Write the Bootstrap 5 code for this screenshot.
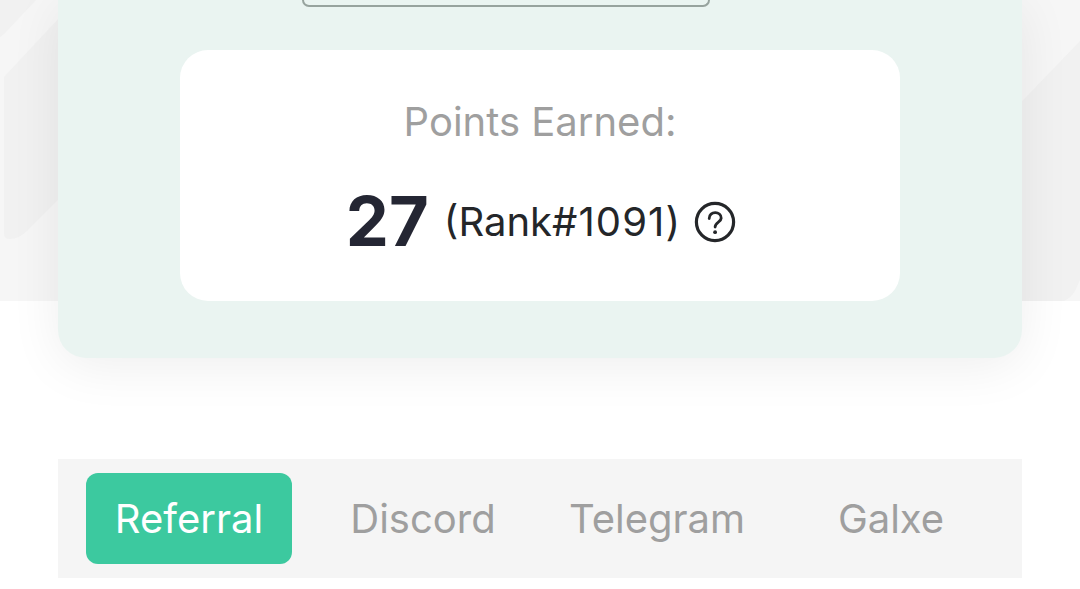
<!DOCTYPE html>
<html lang="en">
<head>
<meta charset="utf-8">
<meta name="viewport" content="width=device-width, initial-scale=1">
<title>Points Earned</title>
<link href="https://cdn.jsdelivr.net/npm/bootstrap@5.3.0/dist/css/bootstrap.min.css" rel="stylesheet">
<style>
body { font-family: Inter, "Liberation Sans", sans-serif; font-size: 40px; line-height: 48px; color: #242629; overflow: hidden; height: 589px; }
.hero-art { height: 301px; }
.page-wrap { padding: 0 58px; }
.panel { height: 358px; background: #eaf4f1; border-radius: 0 0 28px 28px; box-shadow: 0 8px 52px rgba(0,0,0,.07); }
.field-edge { width: 408px; height: 7px; margin-left: 244px; border: 2px solid #97a39e; border-top: 0; border-radius: 0 0 12px 12px; }
.score-card { width: 720px; height: 251px; margin-top: 43px; border-radius: 28px; }
.score-label { color: #9f9f9f; padding-top: 48px; }
.score-line { height: 84px; margin-top: 34px; padding-left: 2px; }
.score-value { font-size: 68.5px; line-height: 84px; color: #242633; }
.rank-text { margin-left: 15px; }
.rank-number { letter-spacing: 1.1px; }
.help-icon { margin-left: 13px; }
.tab-bar { margin-top: 101px; height: 119px; padding: 14px 28px; gap: 28px; background: #f5f5f5; }
.tab-bar .nav-link { height: 91px; padding: 0; border-radius: 12px; color: #9f9f9f; }
.tab-bar .nav-link.active { background: #3cc99f; color: #fff; }
</style>
</head>
<body class="bg-white position-relative">
<svg class="hero-art position-absolute top-0 start-0 w-100" viewBox="0 0 1080 301" aria-hidden="true">
  <rect width="1080" height="301" fill="#f6f6f6"/>
  <path d="M0 0H36L4 34L0 37Z" fill="#f1f1f1"/>
  <path d="M4 77L76 0V182L28 230Q19 239 10 239Q4 239 4 234Z" fill="#f1f1f1"/>
  <path d="M1000 124L1080 41V280L1075 291Q1071 298 1064 301H1000Z" fill="#f1f1f1"/>
</svg>
<main class="page-wrap position-relative">
  <section class="panel">
    <div class="d-flex"><div class="field-edge"></div></div>
    <div class="score-card bg-white mx-auto text-center">
      <div class="score-label">Points Earned:</div>
      <div class="score-line d-flex justify-content-center align-items-center">
        <span class="score-value fw-bold">27</span>
        <span class="rank-text">(Rank<span class="rank-number">#1091)</span></span>
        <svg class="help-icon" width="42" height="42" viewBox="0 0 42 42" fill="none" stroke="#242629" aria-label="Help">
          <circle cx="21" cy="21" r="18.6" stroke-width="3.2"/>
          <path d="M15.2 17.5C15 9.8 27.4 9.8 27.2 17.1C27.1 21.2 21.1 21 21.1 26" stroke-width="2.8" stroke-linecap="round"/>
          <circle cx="21.1" cy="31.2" r="1.9" fill="#242629" stroke="none"/>
        </svg>
      </div>
    </div>
  </section>
  <nav class="tab-bar nav nav-pills nav-fill flex-nowrap">
    <a class="nav-link active d-flex align-items-center justify-content-center w-100" href="#"><span>Referral</span></a>
    <a class="nav-link d-flex align-items-center justify-content-center w-100" href="#"><span>Discord</span></a>
    <a class="nav-link d-flex align-items-center justify-content-center w-100" href="#"><span>Telegram</span></a>
    <a class="nav-link d-flex align-items-center justify-content-center w-100" href="#"><span>Galxe</span></a>
  </nav>
</main>
<script src="https://cdn.jsdelivr.net/npm/bootstrap@5.3.0/dist/js/bootstrap.bundle.min.js"></script>
</body>
</html>
